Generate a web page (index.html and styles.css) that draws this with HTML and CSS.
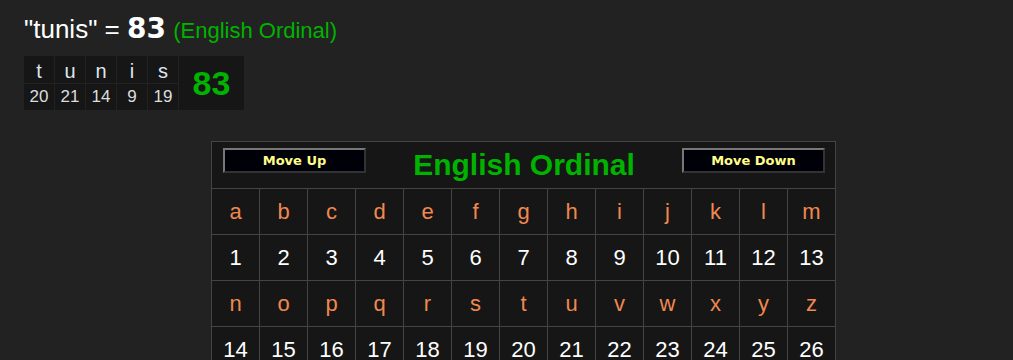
FILE: index.html
```html
<!DOCTYPE html>
<html lang="en">
<head>
    <meta charset="UTF-8">
    <meta name="viewport" content="width=device-width, initial-scale=1.0">
    <title>Gematria - tunis</title>
    <link rel="stylesheet" href="styles.css">
</head>
<body>

    <div class="result">
        <h1 class="phrase">"tunis" = <b class="total">83</b> <span class="cipher-name">(English Ordinal)</span></h1>

        <table class="breakdown">
            <tr>
                <td class="ch">t</td>
                <td class="ch">u</td>
                <td class="ch">n</td>
                <td class="ch">i</td>
                <td class="ch">s</td>
                <td class="sum" rowspan="2">83</td>
            </tr>
            <tr>
                <td class="val">20</td>
                <td class="val">21</td>
                <td class="val">14</td>
                <td class="val">9</td>
                <td class="val">19</td>
            </tr>
        </table>
    </div>

    <table class="chart" id="chart">
        <tr>
            <td class="chart-head" colspan="13">
                <div class="head-bar">
                    <button class="move-btn">Move Up</button>
                    <span class="chart-title">English Ordinal</span>
                    <button class="move-btn">Move Down</button>
                </div>
            </td>
        </tr>
    </table>

    <script>
        const letters = "abcdefghijklmnopqrstuvwxyz";
        const chart = document.getElementById("chart");

        // two letter rows of 13, each followed by its values
        for (let start = 0; start < 26; start += 13) {
            let letterRow = chart.insertRow();
            let valueRow = chart.insertRow();
            for (let i = start; i < start + 13; i++) {
                let l = letterRow.insertCell();
                l.className = "letter";
                l.textContent = letters[i];
                let v = valueRow.insertCell();
                v.className = "value";
                v.textContent = i + 1;
            }
        }
    </script>

</body>
</html>
```

FILE: styles.css
```css
body {
    margin: 0;
    background-color: #222222;
    font-family: "Liberation Sans", Arial, sans-serif;
    color: #ffffff;
}

.result {
    padding: 12px 24px 0 24px;
}

.phrase {
    margin: 0;
    font-size: 26px;
    font-weight: normal;
    line-height: 34px;
}

.total {
    font-family: "DejaVu Sans", Verdana, sans-serif;
    font-size: 28px;
    font-weight: bold;
}

.cipher-name {
    font-size: 22px;
    color: #00b300;
}

.breakdown {
    margin: 7px 0 0 -1px;
    border-collapse: collapse;
    background-color: #161616;
}

.breakdown td {
    border: 1px solid #222222;
    text-align: center;
    padding: 0;
}

.breakdown .ch {
    width: 30px;
    height: 27px;
    font-size: 20px;
    color: #dde6ee;
    vertical-align: bottom;
}

.breakdown .val {
    width: 30px;
    height: 26px;
    font-size: 17px;
    color: #dddddd;
}

.breakdown .sum {
    width: 65px;
    font-size: 34px;
    font-weight: bold;
    color: #00b300;
}

.chart {
    margin: 30px 0 0 211px;
    border-collapse: collapse;
    background-color: #161616;
}

.chart td {
    border: 1px solid #444444;
    padding: 0;
    text-align: center;
}

.chart-head {
    height: 46px;
    vertical-align: top;
}

.head-bar {
    display: flex;
    align-items: flex-start;
    justify-content: space-between;
    padding: 6px 10px 0 11px;
}

.move-btn {
    width: 143px;
    height: 25px;
    background-color: #000008;
    border: 2px solid;
    border-color: #777777 #333333 #333333 #777777;
    color: #ffff88;
    font-family: "DejaVu Sans", Verdana, sans-serif;
    font-size: 13px;
    font-weight: bold;
    padding: 0;
}

.chart-title {
    font-size: 30px;
    font-weight: bold;
    line-height: 34px;
    color: #00b300;
}

.letter,
.value {
    width: 47px;
    height: 45px;
    font-size: 22px;
}

.letter {
    color: #f08850;
}

.value {
    color: #ffffff;
}
```
